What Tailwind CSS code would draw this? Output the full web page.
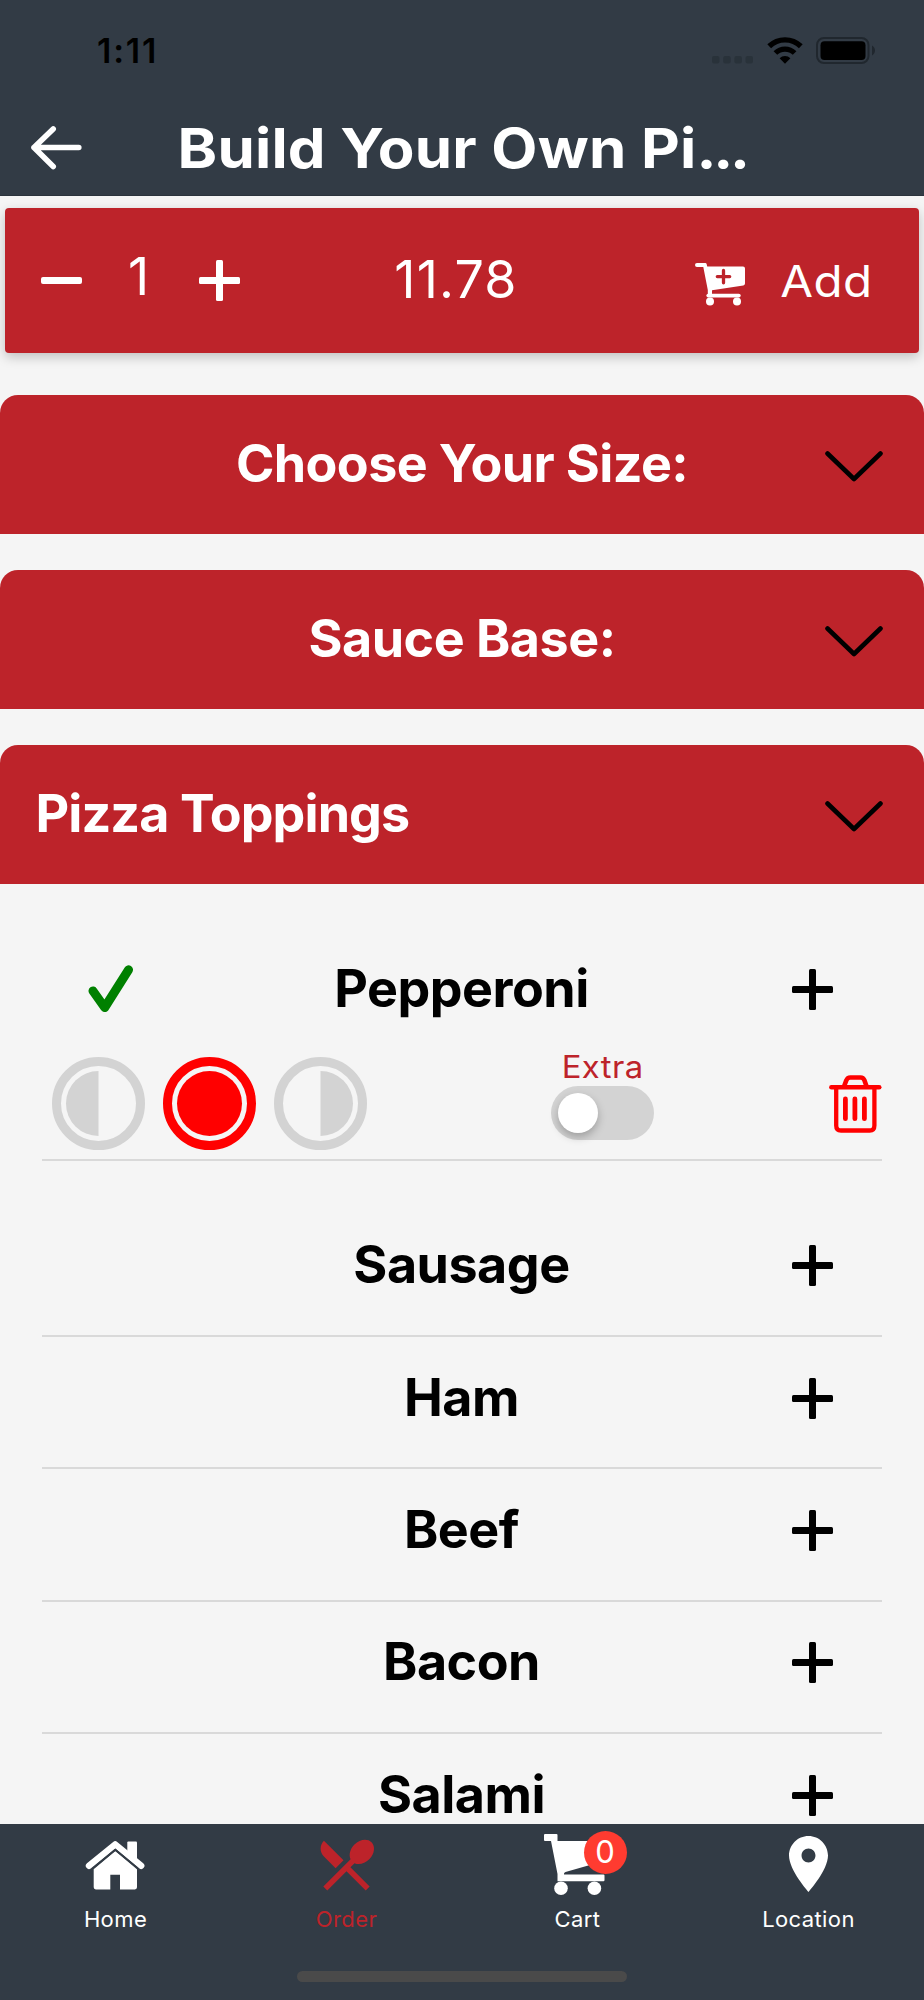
<!DOCTYPE html>
<html lang="en">

<head>
    <meta charset="UTF-8" />
    <meta name="viewport" content="width=device-width, initial-scale=1.0">
    <script src="https://cdn.jsdelivr.net/npm/@tailwindcss/browser@4"></script>
    <title>Build Your Own Pizza</title>
</head>

<body class="bg-[#f5f5f5] font-['Inter',sans-serif]">
    <!-- shared icons -->
    <svg class="hidden" xmlns="http://www.w3.org/2000/svg">
        <symbol id="plus" viewBox="0 0 41 41">
            <rect x="0" y="17" width="41" height="7" rx="1.5" />
            <rect x="17" y="0" width="7" height="41" rx="1.5" />
        </symbol>
        <symbol id="chevron" viewBox="0 0 58 31">
            <path d="M2.5 2.5L29 28L55.5 2.5" fill="none" stroke="currentColor" stroke-width="4.6"
                stroke-linecap="round" stroke-linejoin="round" />
        </symbol>
    </svg>

    <div class="w-[924px] h-[2000px] flex flex-col overflow-hidden">
        <header class="h-[196px] shrink-0 bg-[#323b45] border-b border-[#2b333c]">
            <div class="h-[101px] flex items-center justify-between pl-[97px] pr-[48px]">
                <span class="text-[34px] leading-none font-semibold tracking-[1.8px] text-black">1:11</span>
                <div class="flex items-center">
                    <svg class="w-[41px] h-[27px]" viewBox="0 0 41 27" fill="#29323a">
                        <rect x="0" y="19" width="7.5" height="7.5" rx="2" />
                        <rect x="11.2" y="19" width="7.5" height="7.5" rx="2" />
                        <rect x="22.4" y="19" width="7.5" height="7.5" rx="2" />
                        <rect x="33.5" y="19" width="7.5" height="7.5" rx="2" />
                    </svg>
                    <svg class="w-[36px] h-[27px] ml-[14px]" viewBox="0 0 36 27">
                        <path d="M2.2 9.3A22.6 22.6 0 0 1 33.8 9.3" fill="none" stroke="#000" stroke-width="5.4" />
                        <path d="M8.4 16A13.6 13.6 0 0 1 27.6 16" fill="none" stroke="#000" stroke-width="5.2" />
                        <path d="M18 26.7L12.6 21.2A7.8 7.8 0 0 1 23.4 21.2Z" />
                    </svg>
                    <svg class="w-[60px] h-[27px] ml-[13px]" viewBox="0 0 60 27">
                        <rect x="1" y="1" width="51.5" height="25" rx="7" fill="none" stroke="#20272e"
                            stroke-width="2" />
                        <rect x="4.5" y="4.2" width="45" height="18.8" rx="4" />
                        <path d="M56 8.5c4 2.5 4 7.5 0 10z" fill="#20272e" />
                    </svg>
                </div>
            </div>
            <div class="h-[94px] grid grid-cols-[1fr_auto_1fr] items-center pl-[31px] pr-[31px]">
                <svg class="w-[51px] h-[44px]" viewBox="0 0 51 44" fill="none" stroke="#fff" stroke-width="5.6"
                    stroke-linecap="round" stroke-linejoin="round">
                    <path d="M22.2 3L3 21.5L22.2 40.5M3 21.5H47.8" />
                </svg>
                <h1 class="scale-x-[1.09] text-[55px] leading-none font-bold tracking-[0.2px] text-white whitespace-nowrap">Build Your Own Pi<span class="tracking-[-3px]">...</span></h1>
            </div>
        </header>

        <main class="flex-1 min-h-0 overflow-hidden">
            <div class="mx-[5px] mt-[12px] h-[145px] rounded-[4px] bg-[#bd232a] text-white shadow-[0_4px_12px_rgba(0,0,0,0.22)] grid grid-cols-[1fr_auto_1fr] items-center">
                <div class="flex items-center pl-[36px]">
                    <span class="w-[41px] h-[7px] rounded-[2px] bg-white"></span>
                    <span class="w-[117px] pb-[8px] pr-[4px] text-center text-[52px] leading-none font-normal">1</span>
                    <svg class="w-[41px] h-[41px]" fill="currentColor"><use href="#plus" /></svg>
                </div>
                <span class="pb-[1px] mr-[12px] text-[52px] leading-none font-normal tracking-[1.2px]">11.78</span>
                <div class="flex items-center justify-end pr-[46px]">
                    <svg class="w-[50px] h-[43px] mr-[42px] mt-[7px]" viewBox="0 0 50 43">
                        <path fill="#fff"
                            d="M2 0H10.3Q11.4 0 11.7 1.2L12.2 3.6H48Q50 3.6 50 5.6V20.6Q50 22.3 48.3 22.6L17 27.2V31H12.8V27L8.3 4H2A2 2 0 0 1 2 0Z" />
                        <path d="M13.3 32.6H43.8" stroke="#fff" stroke-width="3.8" stroke-linecap="round" />
                        <circle cx="15" cy="38.4" r="4" fill="#fff" />
                        <circle cx="42" cy="38.4" r="4" fill="#fff" />
                        <path d="M28.5 7.4V19.8M22.3 13.6H34.7" stroke="#bd232a" stroke-width="3.3"
                            stroke-linecap="round" />
                    </svg>
                    <span class="origin-right scale-x-[1.08] text-[44px] leading-none tracking-[0.5px]">Add</span>
                </div>
            </div>

            <section class="mt-[42px] h-[139px] pb-[1px] rounded-t-[18px] bg-[#bd232a] grid grid-cols-[1fr_auto_1fr] items-center px-[41px]">
                <h2 class="col-start-2 text-[52px] leading-none font-bold tracking-[-0.6px] text-white">Choose Your Size:</h2>
                <svg class="w-[58px] h-[31px] mt-[4px] justify-self-end"><use href="#chevron" /></svg>
            </section>
            <section class="mt-[36px] h-[139px] pb-[1px] rounded-t-[18px] bg-[#bd232a] grid grid-cols-[1fr_auto_1fr] items-center px-[41px]">
                <h2 class="col-start-2 text-[52px] leading-none font-bold tracking-[-0.5px] text-white">Sauce Base:</h2>
                <svg class="w-[58px] h-[31px] mt-[4px] justify-self-end"><use href="#chevron" /></svg>
            </section>
            <section class="mt-[36px] h-[139px] pb-[1px] rounded-t-[18px] bg-[#bd232a] flex items-center justify-between pl-[35.5px] pr-[41px]">
                <h2 class="text-[52px] leading-none font-bold tracking-[-0.9px] text-white">Pizza Toppings</h2>
                <svg class="w-[58px] h-[31px] mt-[4px]"><use href="#chevron" /></svg>
            </section>

            <ul class="mx-[42px] text-[52px] leading-none font-bold tracking-[-0.5px] text-black">
                <li class="pt-[39px] h-[277px] border-b-2 border-[#d9d9d9]">
                    <div class="h-[132px] grid grid-cols-[1fr_auto_1fr] items-center">
                        <svg class="w-[46px] h-[48px] ml-[46px]" viewBox="0 0 46 48" fill="none" stroke="#008000"
                            stroke-width="9" stroke-linecap="round" stroke-linejoin="round">
                            <path d="M5 26L16.7 42.5L40.5 4.8" />
                        </svg>
                        <span class="pb-[1px] mr-[1px]">Pepperoni</span>
                        <svg class="w-[41px] h-[41px] mr-[49px] justify-self-end"><use href="#plus" /></svg>
                    </div>
                    <div class="h-[104px] flex items-start pl-[10px]">
                        <svg class="w-[93px] h-[93px] mt-[2px]" viewBox="0 0 93 93">
                            <circle cx="46.5" cy="46.5" r="42" fill="none" stroke="#d3d3d3" stroke-width="9" />
                            <path d="M46.5 14A32.5 32.5 0 0 0 46.5 79Z" fill="#d3d3d3" />
                        </svg>
                        <svg class="w-[93px] h-[93px] mt-[2px] ml-[18px]" viewBox="0 0 93 93">
                            <circle cx="46.5" cy="46.5" r="42" fill="none" stroke="#f00" stroke-width="9" />
                            <circle cx="46.5" cy="46.5" r="32.5" fill="#f00" />
                        </svg>
                        <svg class="w-[93px] h-[93px] mt-[2px] ml-[18px]" viewBox="0 0 93 93">
                            <circle cx="46.5" cy="46.5" r="42" fill="none" stroke="#d3d3d3" stroke-width="9" />
                            <path d="M46.5 14A32.5 32.5 0 0 1 46.5 79Z" fill="#d3d3d3" />
                        </svg>
                        <div class="ml-[184px] w-[103px] flex flex-col items-center">
                            <span class="h-[31px] flex items-center pb-[8px] scale-x-[1.06] text-[31px] font-normal tracking-[0.4px] text-[#bd232a]">Extra</span>
                            <div class="w-[103px] h-[54px] rounded-full bg-[#d3d3d3] flex items-center pl-[7px]">
                                <span class="w-[40px] h-[40px] rounded-full bg-white shadow-[0_4px_8px_rgba(0,0,0,0.25)]"></span>
                            </div>
                        </div>
                        <svg class="w-[53px] h-[58px] mt-[20px] ml-[175px]" viewBox="0 0 53 58" fill="none"
                            stroke="#f00" stroke-linecap="round" stroke-linejoin="round">
                            <path d="M2.4 12.2H50.2" stroke-width="4.6" />
                            <path d="M7.2 13V50.5Q7.2 55.5 12 55.5H40.7Q45.4 55.5 45.4 50.5V13" stroke-width="4.3" />
                            <path d="M15 11.5L17.3 5.4Q18.5 2.5 21.3 2.5H31.5Q34.3 2.5 35.5 5.4L37.6 11.5"
                                stroke-width="4.6" />
                            <path d="M16.4 24V43.7M25.9 24V43.7M35.4 24V43.7" stroke-width="4.8" />
                        </svg>
                    </div>
                </li>
                <li class="mt-[43.5px] h-[132.4px] pb-[9px] border-b-2 border-[#d9d9d9] grid grid-cols-[1fr_auto_1fr] items-center">
                    <span class="col-start-2 mr-[1px]">Sausage</span>
                    <svg class="w-[41px] h-[41px] mt-[1px] mr-[49px] justify-self-end"><use href="#plus" /></svg>
                </li>
                <li class="h-[132.4px] pb-[9px] border-b-2 border-[#d9d9d9] grid grid-cols-[1fr_auto_1fr] items-center">
                    <span class="col-start-2 mr-[1px]">Ham</span>
                    <svg class="w-[41px] h-[41px] mt-[1px] mr-[49px] justify-self-end"><use href="#plus" /></svg>
                </li>
                <li class="h-[132.4px] pb-[9px] border-b-2 border-[#d9d9d9] grid grid-cols-[1fr_auto_1fr] items-center">
                    <span class="col-start-2 mr-[1px]">Beef</span>
                    <svg class="w-[41px] h-[41px] mt-[1px] mr-[49px] justify-self-end"><use href="#plus" /></svg>
                </li>
                <li class="h-[132.4px] pb-[9px] border-b-2 border-[#d9d9d9] grid grid-cols-[1fr_auto_1fr] items-center">
                    <span class="col-start-2 mr-[1px]">Bacon</span>
                    <svg class="w-[41px] h-[41px] mt-[1px] mr-[49px] justify-self-end"><use href="#plus" /></svg>
                </li>
                <li class="h-[132.4px] pb-[9px] border-b-2 border-[#d9d9d9] grid grid-cols-[1fr_auto_1fr] items-center">
                    <span class="col-start-2 mr-[1px]">Salami</span>
                    <svg class="w-[41px] h-[41px] mt-[1px] mr-[49px] justify-self-end"><use href="#plus" /></svg>
                </li>
            </ul>
        </main>

        <footer class="h-[176px] shrink-0 bg-[#323b45] flex flex-col items-center">
            <nav class="w-full h-[147px] grid grid-cols-4 text-[22px] leading-none tracking-[0.4px] text-white">
                <a href="#" class="flex flex-col items-center">
                    <div class="h-[84px] pt-[17px]">
                        <svg class="w-[60px] h-[49px] mr-[1px]" viewBox="0 0 60 49" fill="#fff">
                            <path d="M42.3 1.5Q42.3.5 43.3.5H51Q52 .5 52 1.5V19L42.3 11Z" />
                            <path d="M4 24.8L30.2 3.4L56.2 24.8" fill="none" stroke="#fff" stroke-width="6.4"
                                stroke-linecap="round" stroke-linejoin="round" />
                            <path
                                d="M8.7 27.6L30.3 10L52 27.6V46.3Q52 48.4 49.9 48.4H35V33.7H25.3V48.4H10.8Q8.7 48.4 8.7 46.3Z" />
                            <path d="M8 27.6L30.3 8.8L52.6 27.6" fill="none" stroke="#323b45" stroke-width="2" />
                        </svg>
                    </div>
                    <span>Home</span>
                </a>
                <a href="#" class="flex flex-col items-center text-[#bd232a]">
                    <div class="h-[84px] pt-[7px]">
                        <svg class="w-[67px] h-[67px]" viewBox="0 0 24 24" fill="currentColor">
                            <path
                                d="M8.1 13.34l2.83-2.83L3.91 3.5c-1.56 1.56-1.56 4.09 0 5.66l4.19 4.18zm6.78-1.81c1.53.71 3.68.21 5.27-1.38 1.91-1.91 2.28-4.65.81-6.12-1.46-1.46-4.2-1.1-6.12.81-1.59 1.59-2.09 3.74-1.38 5.27L3.7 19.87l1.41 1.41L12 14.41l6.88 6.88 1.41-1.41L13.41 13l1.47-1.47z" />
                        </svg>
                    </div>
                    <span>Order</span>
                </a>
                <a href="#" class="flex flex-col items-center">
                    <div class="relative h-[84px] pt-[10px]">
                        <svg class="w-[67px] h-[61px]" viewBox="0 0 67 61" fill="#fff">
                            <path
                                d="M1 0H12.5Q13.5 0 13.5 1V7H60V27L21.5 38Q19.5 38.7 20 40.5H59.5Q60.5 40.5 60.5 41.5V46Q60.5 47.2 59.5 47.2H13.5V40L7 7H1Q0 7 0 6V1Q0 0 1 0Z" />
                            <circle cx="17" cy="54.2" r="6.8" />
                            <circle cx="50.4" cy="54.2" r="6.8" />
                        </svg>
                        <span class="absolute left-[39.5px] top-[7px] w-[43px] h-[43px] rounded-full bg-[#ff3b30] flex items-center justify-center pb-[2px] text-[31px] font-normal tracking-normal">0</span>
                    </div>
                    <span>Cart</span>
                </a>
                <a href="#" class="flex flex-col items-center">
                    <div class="h-[84px] pt-[12px]">
                        <svg class="w-[39px] h-[56px]" viewBox="5 2 14 20" preserveAspectRatio="none" fill="#fff">
                            <path
                                d="M12 2C8.13 2 5 5.13 5 9c0 5.25 7 13 7 13s7-7.75 7-13c0-3.87-3.13-7-7-7zm0 9.5c-1.38 0-2.5-1.12-2.5-2.5s1.12-2.5 2.5-2.5 2.5 1.12 2.5 2.5-1.12 2.5-2.5 2.5z" />
                        </svg>
                    </div>
                    <span>Location</span>
                </a>
            </nav>
            <div class="w-[330px] h-[11px] rounded-full bg-[#4a4a4a]"></div>
        </footer>
    </div>
</body>

</html>
